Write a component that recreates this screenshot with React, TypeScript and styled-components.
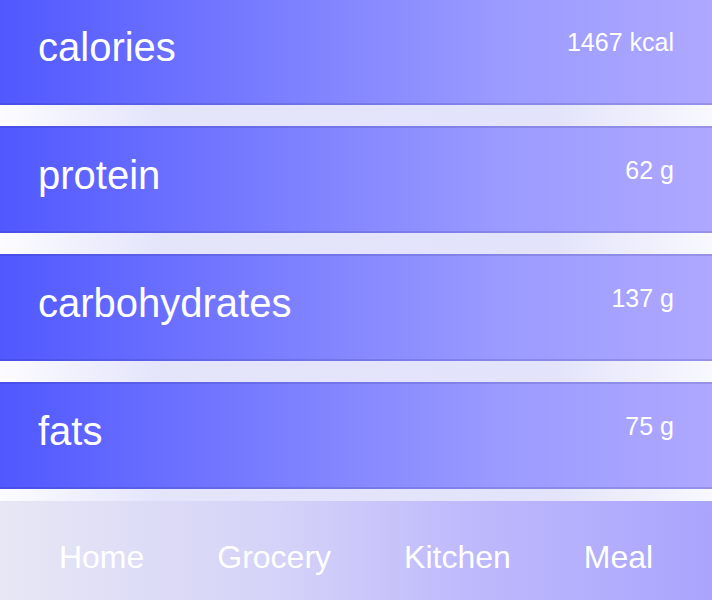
import React from "react";
import styled, { createGlobalStyle } from "styled-components";

const GlobalStyle = createGlobalStyle`
  html, body {
    margin: 0;
    padding: 0;
  }
  body {
    font-family: "Liberation Sans", Arial, sans-serif;
    background: linear-gradient(90deg, #fcfcff 0%, #e4e5fb 22%, #e3e4fb 78%, #f8f8fe 100%);
    min-height: 600px;
    overflow: hidden;
  }
`;

const Page = styled.div`
  display: flex;
  flex-direction: column;
  height: 600px;
`;

const List = styled.div`
  display: flex;
  flex-direction: column;
  gap: 21px;
`;

const Card = styled.section`
  display: flex;
  justify-content: space-between;
  align-items: flex-start;
  box-sizing: border-box;
  height: 107px;
  padding: 25px 38px 0;
  background: linear-gradient(90deg, #5058ff 0%, #7c7fff 40%, #9c9cff 72%, #aea8ff 100%);
  border-top: 2px solid rgba(30, 30, 110, 0.16);
  border-bottom: 2px solid rgba(30, 30, 110, 0.16);
  color: #ffffff;

  &:first-child {
    border-top: none;
    height: 105px;
  }
`;

const Label = styled.h2`
  margin: 0;
  font-size: 40px;
  font-weight: 400;
  line-height: normal;
`;

const Value = styled.span`
  margin-top: 3px;
  font-size: 25px;
  line-height: normal;
`;

const Nav = styled.nav`
  margin-top: auto;
  height: 99px;
  box-sizing: border-box;
  padding-top: 38px;
  display: flex;
  justify-content: center;
  align-items: flex-start;
  gap: 73px;
  background: linear-gradient(90deg, #e7e7f5 0%, #d4d2f8 40%, #bfbafc 65%, #aaa4fd 100%);
`;

const NavLink = styled.a`
  font-size: 32px;
  line-height: normal;
  color: #ffffff;
  text-decoration: none;
  cursor: pointer;
`;

const stats = [
  { label: "calories", value: "1467 kcal" },
  { label: "protein", value: "62 g" },
  { label: "carbohydrates", value: "137 g" },
  { label: "fats", value: "75 g" },
];

const links = ["Home", "Grocery", "Kitchen", "Meal"];

export default function App() {
  return (
    <>
      <GlobalStyle />
      <Page>
        <List>
          {stats.map((s) => (
            <Card key={s.label}>
              <Label>{s.label}</Label>
              <Value>{s.value}</Value>
            </Card>
          ))}
        </List>
        <Nav>
          {links.map((l) => (
            <NavLink key={l}>{l}</NavLink>
          ))}
        </Nav>
      </Page>
    </>
  );
}
